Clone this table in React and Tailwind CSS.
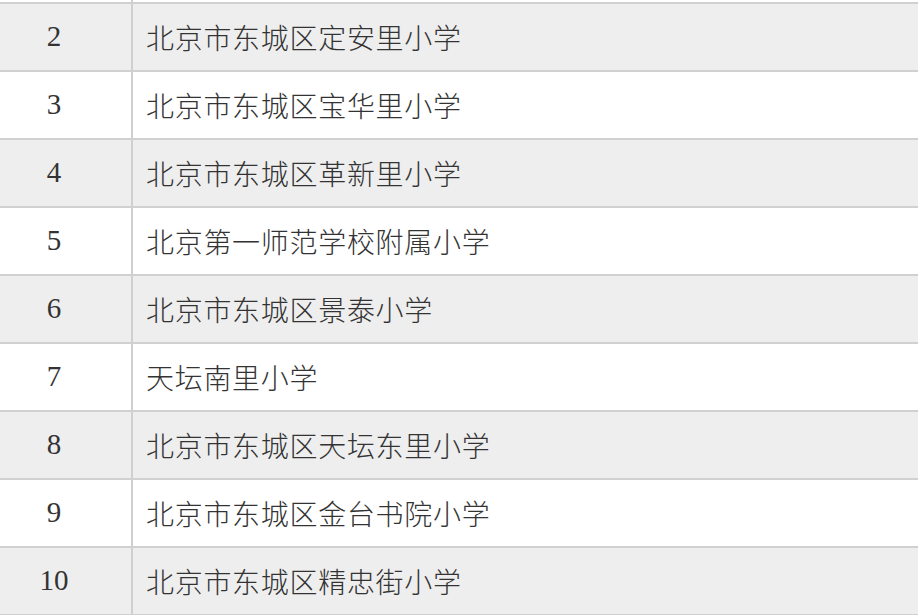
const schools = [
  { no: 2, name: '北京市东城区定安里小学' },
  { no: 3, name: '北京市东城区宝华里小学' },
  { no: 4, name: '北京市东城区革新里小学' },
  { no: 5, name: '北京第一师范学校附属小学' },
  { no: 6, name: '北京市东城区景泰小学' },
  { no: 7, name: '天坛南里小学' },
  { no: 8, name: '北京市东城区天坛东里小学' },
  { no: 9, name: '北京市东城区金台书院小学' },
  { no: 10, name: '北京市东城区精忠街小学' },
];

export default function App() {
  return (
    <div className="w-[918px] h-[615px] overflow-hidden bg-white text-[#333]">
      {/* 表格已向下滚动，上一行只露出底部 */}
      <div className="flex h-[2px]">
        <div className="w-[133px] border-r-2 border-[#d0d0d0]"></div>
      </div>
      <div className="border-t-2 border-[#d0d0d0]">
        {schools.map((s) => (
          <div
            key={s.no}
            className={`flex h-[68px] border-b-2 border-[#d0d0d0] ${s.no % 2 === 0 ? 'bg-[#eeeeee]' : 'bg-white'}`}
          >
            <div className="w-[133px] shrink-0 pr-[23px] flex items-center justify-center border-r-2 border-[#d0d0d0] font-['Liberation_Serif',serif] text-[29px]">
              {s.no}
            </div>
            <div className="flex-1 flex items-center pl-[13px] font-['Noto_Sans_CJK_SC',sans-serif] font-light text-[28px] tracking-[0.7px]">
              {s.name}
            </div>
          </div>
        ))}
      </div>
    </div>
  );
}
